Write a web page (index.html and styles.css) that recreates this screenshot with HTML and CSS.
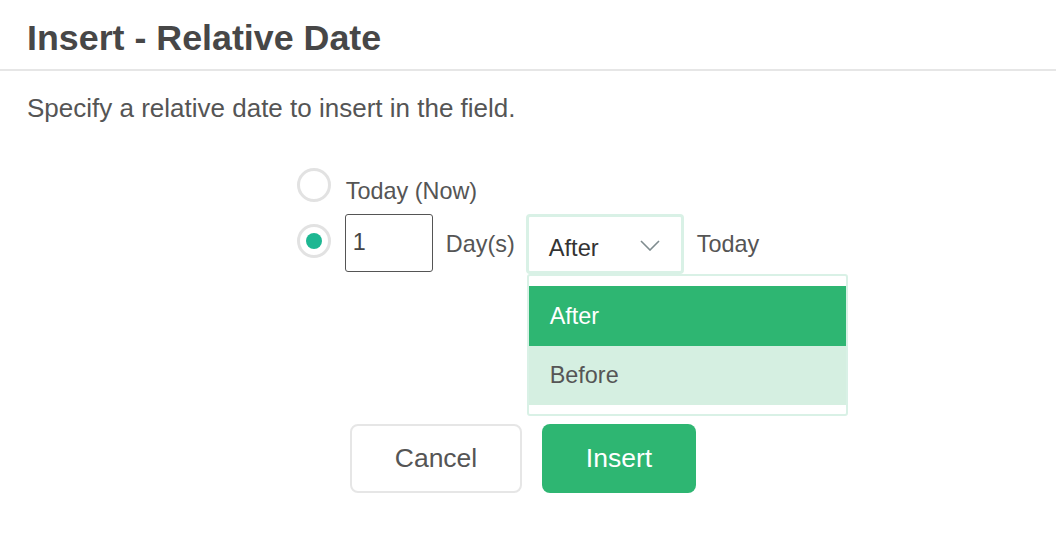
FILE: index.html
```html
<!DOCTYPE html>
<html>
<head>
<meta charset="utf-8">
<link rel="stylesheet" href="styles.css">
</head>
<body>
<div class="dialog">
  <div class="header"><h1 class="title">Insert - Relative Date</h1></div>
  <p class="desc">Specify a relative date to insert in the field.</p>
  <div class="form">
    <div class="options">
      <div class="row row-now">
        <span class="radio"></span>
        <span class="label label-now">Today (Now)</span>
      </div>
      <div class="row row-rel">
        <span class="radio radio-on"><span class="dot"></span></span>
        <div class="num">1</div>
        <span class="label label-days">Day(s)</span>
        <div class="select">
          <span class="select-value">After</span>
          <svg class="chev" width="20" height="11" viewBox="0 0 20 11"><path d="M1 1 L10 10 L19 1" fill="none" stroke="#7f8c8f" stroke-width="1.6"/></svg>
          <div class="menu">
            <div class="item item-active">After</div>
            <div class="item item-hover">Before</div>
          </div>
        </div>
        <span class="label label-today">Today</span>
      </div>
    </div>
  </div>
  <div class="buttons">
    <button class="btn btn-cancel">Cancel</button>
    <button class="btn btn-insert">Insert</button>
  </div>
</div>
</body>
</html>
```
FILE: styles.css
```css
html, body {
  margin: 0;
  padding: 0;
  background: #ffffff;
}
body {
  font-family: "Liberation Sans", Arial, Helvetica, sans-serif;
  color: #555555;
  width: 1056px;
  height: 546px;
  overflow: hidden;
}
.header {
  padding: 18px 27px 11px;
  border-bottom: 2px solid #e6e6e6;
}
.title {
  margin: 0;
  font-size: 35.8px;
  line-height: 40px;
  font-weight: bold;
  color: #474747;
}
.desc {
  margin: 22px 0 0 27px;
  font-size: 26px;
  line-height: 30px;
  color: #555555;
}
.form {
  display: flex;
  justify-content: center;
  margin-top: 45px;
}
.options {
  display: flex;
  flex-direction: column;
  gap: 9px;
}
.row {
  display: flex;
  align-items: flex-start;
}
.radio {
  box-sizing: border-box;
  width: 34px;
  height: 34px;
  border: 3.5px solid #e2e2e2;
  border-radius: 50%;
  display: flex;
  align-items: center;
  justify-content: center;
  flex: none;
}
.radio-on {
  margin-top: 10px;
}
.dot {
  width: 16px;
  height: 16px;
  border-radius: 50%;
  background: #1db792;
}
.label {
  font-size: 23.4px;
  line-height: 28px;
  color: #555555;
}
.label-now {
  margin-left: 15px;
  padding-top: 9px;
}
.num {
  box-sizing: border-box;
  width: 88px;
  height: 58px;
  margin-left: 14px;
  border: 1.5px solid #555555;
  border-radius: 3px;
  padding-left: 7px;
  font-size: 23.4px;
  line-height: 55px;
  color: #444444;
}
.label-days {
  margin-left: 13px;
  padding-top: 16px;
}
.select {
  position: relative;
  box-sizing: border-box;
  width: 158px;
  height: 60px;
  margin-left: 11px;
  border: 3px solid #d9f1e6;
  border-radius: 4px;
  display: flex;
  align-items: center;
  padding: 8px 21px 0 20px;
  justify-content: space-between;
}
.select-value {
  font-size: 23.7px;
  color: #333333;
}
.chev {
  display: block;
  margin-top: -5px;
}
.menu {
  position: absolute;
  left: -2px;
  top: 57px;
  box-sizing: border-box;
  width: 321px;
  height: 142px;
  border: 2px solid #d9f1e6;
  border-radius: 3px;
  padding: 10px 0 9px;
  background: #ffffff;
  z-index: 2;
}
.item {
  font-size: 23.4px;
  padding-left: 21px;
  display: flex;
  align-items: center;
}
.item-active {
  height: 60px;
  background: #2eb672;
  color: #ffffff;
}
.item-hover {
  height: 59px;
  background: #d5efe1;
  color: #555555;
}
.label-today {
  margin-left: 13px;
  padding-top: 16px;
}
.buttons {
  display: flex;
  justify-content: center;
  gap: 20px;
  margin-top: 150px;
  padding-right: 10px;
}
.btn {
  box-sizing: border-box;
  height: 69px;
  border-radius: 8px;
  font-family: "Liberation Sans", Arial, Helvetica, sans-serif;
  font-size: 26.5px;
  cursor: pointer;
}
.btn-cancel {
  width: 172px;
  background: #ffffff;
  border: 2px solid #e6e6e6;
  color: #555555;
}
.btn-insert {
  width: 154px;
  background: #2eb672;
  border: none;
  color: #ffffff;
}
```
